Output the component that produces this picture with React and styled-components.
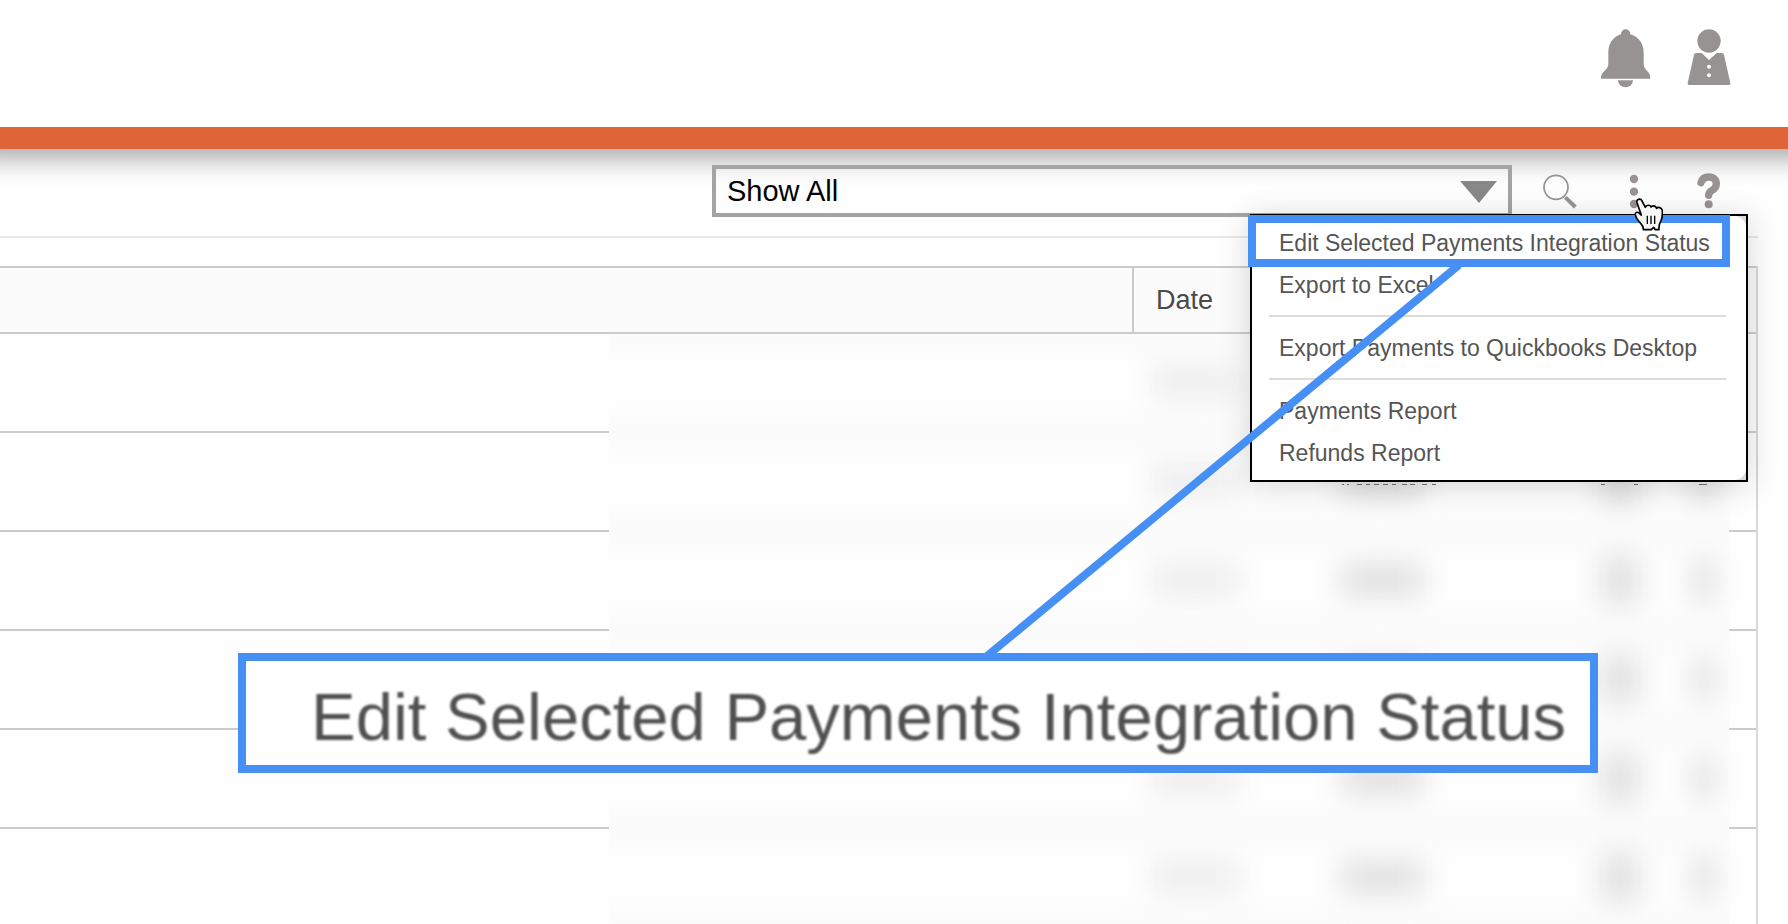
import React from "react";
import styled, { createGlobalStyle } from "styled-components";

const BLUE = "#468ff5";
const ICON = "#979392";

const Global = createGlobalStyle`
  *, *::before, *::after { box-sizing: border-box; }
  body {
    margin: 0;
    background: #fff;
    font-family: "Liberation Sans", Arial, Helvetica, sans-serif;
    color: #4a4a4a;
  }
`;

const Page = styled.div`
  position: relative;
  height: 100vh;
  overflow: hidden;
  background: #fefefe;
`;

const Header = styled.header`
  position: relative;
  display: flex;
  justify-content: flex-end;
  align-items: flex-start;
  gap: 36px;
  height: 149px;
  margin: 0 -24px;
  padding: 28px 81px 0 0;
  background: #fff;
  border-bottom: 22px solid #df6437;
  box-shadow: 0 10px 24px rgba(0, 0, 0, 0.33);
`;

const HeaderButton = styled.button`
  display: block;
  padding: 0;
  border: 0;
  background: none;
  color: ${ICON};

  svg { display: block; fill: currentColor; }
`;

const Content = styled.main`
  margin-right: 30px;
`;

const Toolbar = styled.div`
  position: relative;
  display: flex;
  justify-content: flex-end;
  align-items: flex-start;
  height: 89px;
  padding: 16px 13px 0 0;
  border-bottom: 2px solid #e8e8e8;
`;

const SelectBox = styled.div`
  position: relative;
  flex: 0 1 800px;
  margin-right: 11px;
`;

const FilterSelect = styled.select`
  display: block;
  width: 100%;
  height: 52px;
  padding: 0 60px 0 11px;
  border: 4px solid #a4a4a4;
  border-radius: 0;
  appearance: none;
  background: transparent;
  color: #000;
  font: 29px "Liberation Sans", Arial, sans-serif;
`;

const Caret = styled.svg`
  position: absolute;
  right: 15px;
  top: 16px;
  fill: #888;
  pointer-events: none;
`;

const ToolButton = styled.button`
  display: flex;
  justify-content: center;
  width: 74px;
  height: 52px;
  padding: 7px 0 0;
  border: 0;
  background: none;
  color: ${ICON};
`;

const Menu = styled.nav`
  position: absolute;
  z-index: 2;
  top: 65px;
  right: 10px;
  width: 498px;
  border: 2px solid #000;
  background: #dcdcdc;
  box-shadow: 0 4px 30px rgba(0, 0, 0, 0.16);
`;

const MenuList = styled.ul`
  margin: 0;
  padding: 6px 20px 6px 17px;
  list-style: none;
  background: #fff;
  border-radius: 0 12px 12px 0;
`;

const MenuGroup = styled.li`
  & + & {
    margin-top: 9px;
    padding-top: 10px;
    border-top: 2px solid #dcdcdc;
  }
`;

const MenuLink = styled.a`
  display: block;
  padding-left: 10px;
  font-size: 23px;
  line-height: 42px;
  white-space: nowrap;
  color: #555;
  text-decoration: none;
`;

const Grid = styled.table`
  width: 100%;
  margin-top: 28px;
  table-layout: fixed;
  border-spacing: 0;
  border: 2px solid #cbcbcb;
  border-width: 0 2px 0 0;
  border-right-color: #d8d8d8;
`;

const Col = styled.col`
  width: ${(p) => p.$w};
`;

const HeadCell = styled.th`
  height: 68px;
  padding: 0 0 0 22px;
  border-top: 2px solid #cbcbcb;
  border-bottom: 2px solid #cbcbcb;
  border-left: ${(p) => (p.$divided ? "2px solid #cbcbcb" : "0")};
  background: #fbfbfb;
  font-size: 27px;
  font-weight: 400;
  line-height: 32px;
  text-align: left;
`;

const Cell = styled.td`
  height: 99px;
  padding: 0;
  border-bottom: 2px solid #cbcbcb;
`;

const HiddenCell = styled.td`
  height: 99px;
  padding: 0 0 4px ${(p) => p.$pad || 0}px;
  background: linear-gradient(#fbfbfb, #fefefe 35%, #fefefe 65%, #fbfbfb);
`;

const Smudge = styled.span`
  display: block;
  width: ${(p) => p.$w}px;
  height: ${(p) => p.$h}px;
  background: ${(p) => p.$c};
  filter: blur(14px);
`;

const Highlight = styled.div`
  position: absolute;
  z-index: 3;
  top: 215px;
  right: 58px;
  width: 482px;
  height: 52px;
  border: 8px solid ${BLUE};
`;

const Connector = styled.svg`
  position: absolute;
  z-index: 3;
  top: 260px;
  right: 318px;
`;

const Callout = styled.div`
  position: absolute;
  z-index: 4;
  top: 653px;
  right: 190px;
  width: 1360px;
  padding: 16px 0 8px 65px;
  border: 8px solid ${BLUE};
  background: #fff;
  color: #505050;
  font-size: 67px;
  line-height: 80px;
  white-space: nowrap;

  span { filter: blur(1px); }
`;

const Pointer = styled.svg`
  position: absolute;
  z-index: 5;
  top: 198px;
  right: 125px;
`;

const CutOff = styled.svg`
  position: absolute;
  z-index: 3;
  top: 484px;
  right: 78px;
`;

const groups = [
  ["Edit Selected Payments Integration Status", "Export to Excel"],
  ["Export Payments to Quickbooks Desktop"],
  ["Payments Report", "Refunds Report"],
];

const rows = [1, 2, 3, 4, 5, 6];

function Bell() {
  return (
    <svg width="50" height="60" viewBox="0 0 150 180" aria-hidden="true">
      <circle cx="74" cy="18" r="14" />
      <path d="M22 72C22 40 44 17 74 17s54 23 54 55v34c0 24 20 22 20 44q0 2-2 2H2q-2 0-2-2c0-22 22-20 22-44z" />
      <path d="M51 157h45a22.500 21 0 0 1-45 0z" />
    </svg>
  );
}

function Person() {
  return (
    <svg width="44" height="60" viewBox="0 0 132 180" aria-hidden="true">
      <circle cx="66" cy="39" r="35" />
      <path
        fillRule="evenodd"
        d="M28 75h16l22 21 23-21h15q6 0 7 5l19 86q1 5-4 5H6q-5 0-4-5L21 80q1-5 7-5zM66 110a6 6 0 1 0 0 12a6 6 0 1 0 0-12zM66 136a6 6 0 1 0 0 12a6 6 0 1 0 0-12z"
      />
    </svg>
  );
}

function SearchIcon() {
  return (
    <svg width="36" height="38" viewBox="0 0 108 114" fill="none" stroke="currentColor" aria-hidden="true">
      <circle cx="42" cy="46" r="36" strokeWidth="5" />
      <path d="M70 76l30 29" strokeWidth="12" />
    </svg>
  );
}

function DotsIcon() {
  return (
    <svg width="10" height="38" viewBox="0 0 30 114" fill="currentColor" aria-hidden="true">
      <circle cx="15" cy="21" r="12.500" />
      <circle cx="15" cy="59" r="12.500" />
      <circle cx="15" cy="96" r="12.500" />
    </svg>
  );
}

function HelpIcon() {
  return (
    <svg width="24" height="38" viewBox="-2 0 72 114" fill="none" stroke="currentColor" aria-hidden="true">
      <path d="M13 32C16 20 25 15 37 15c14 0 22 9 22 20 0 11-6 16-13 20-7 4-10 7-10 15" strokeWidth="22" strokeLinecap="round" />
      <circle cx="36" cy="97" r="12" fill="currentColor" stroke="none" />
    </svg>
  );
}

export default function App() {
  return (
    <Page>
      <Global />
      <Header>
        <HeaderButton aria-label="Notifications"><Bell /></HeaderButton>
        <HeaderButton aria-label="Account"><Person /></HeaderButton>
      </Header>
      <Content>
        <Toolbar>
          <SelectBox>
            <FilterSelect aria-label="Filter payments" defaultValue="all">
              <option value="all">Show All</option>
            </FilterSelect>
            <Caret width="37" height="22" viewBox="0 0 37 22" aria-hidden="true">
              <path d="M0 0h37L19 22z" />
            </Caret>
          </SelectBox>
          <ToolButton aria-label="Search"><SearchIcon /></ToolButton>
          <ToolButton aria-label="More actions"><DotsIcon /></ToolButton>
          <ToolButton aria-label="Help"><HelpIcon /></ToolButton>
          <Menu aria-label="More actions">
            <MenuList>
              {groups.map((items) => (
                <MenuGroup key={items[0]}>
                  {items.map((item) => (
                    <MenuLink key={item} href="#">{item}</MenuLink>
                  ))}
                </MenuGroup>
              ))}
            </MenuList>
          </Menu>
        </Toolbar>
        <Grid>
          <colgroup>
            <Col $w="609px" />
            <Col $w="auto" />
            <Col $w="117px" />
            <Col $w="264px" />
            <Col $w="166px" />
            <Col $w="50px" />
            <Col $w="27px" />
          </colgroup>
          <thead>
            <tr>
              <HeadCell colSpan={2} />
              <HeadCell $divided scope="col">Date</HeadCell>
              <HeadCell colSpan={4} />
            </tr>
          </thead>
          <tbody>
            {rows.map((row) => (
              <tr key={row}>
                <Cell />
                <HiddenCell />
                <HiddenCell $pad={20}><Smudge $w={86} $h={34} $c="#ededed" /></HiddenCell>
                <HiddenCell $pad={92}><Smudge $w={82} $h={34} $c="#e0e0e0" /></HiddenCell>
                <HiddenCell $pad={88}><Smudge $w={38} $h={50} $c="#e0e0e0" /></HiddenCell>
                <HiddenCell $pad={14}><Smudge $w={22} $h={44} $c="#e0e0e0" /></HiddenCell>
                <Cell />
              </tr>
            ))}
          </tbody>
        </Grid>
      </Content>

      <CutOff width="370" height="1" viewBox="0 0 370 1" aria-hidden="true">
        <path
          d="M2 .5h2M7 .5h2M17 .5h5M26 .5h4M34 .5h5M43 .5h5M52 .5h4M62 .5h5M70 .5h5M82 .5h5M92 .5h4M261 .5h4M294 .5h4M359 .5h8"
          stroke="#666"
        />
      </CutOff>
      <Highlight />
      <Connector width="490" height="400" viewBox="0 0 490 400" aria-hidden="true">
        <path d="M479 5L7 396" stroke={BLUE} strokeWidth="8" />
      </Connector>
      <Callout><span>Edit Selected Payments Integration Status</span></Callout>
      <Pointer width="29" height="34" viewBox="-2 0 87 102" aria-hidden="true">
        <path
          d="M7 14C4 3 18 0 22 9L32 28C34 20 46 20 49 27C53 21 63 23 66 31C70 26 81 28 83 38C84 54 82 62 79 68C74 76 72 84 73 95H62L57 88L50 95H26C27 86 24 82 18 76C8 66 4 60 2 50C1 42 10 40 15 47L20 51Z"
          fill="#f6f6f6"
          stroke="#000"
          strokeWidth="5"
          strokeLinejoin="round"
        />
        <path d="M38 53v25M49 53v25M60 53v25" stroke="#000" strokeWidth="4" />
      </Pointer>
    </Page>
  );
}
